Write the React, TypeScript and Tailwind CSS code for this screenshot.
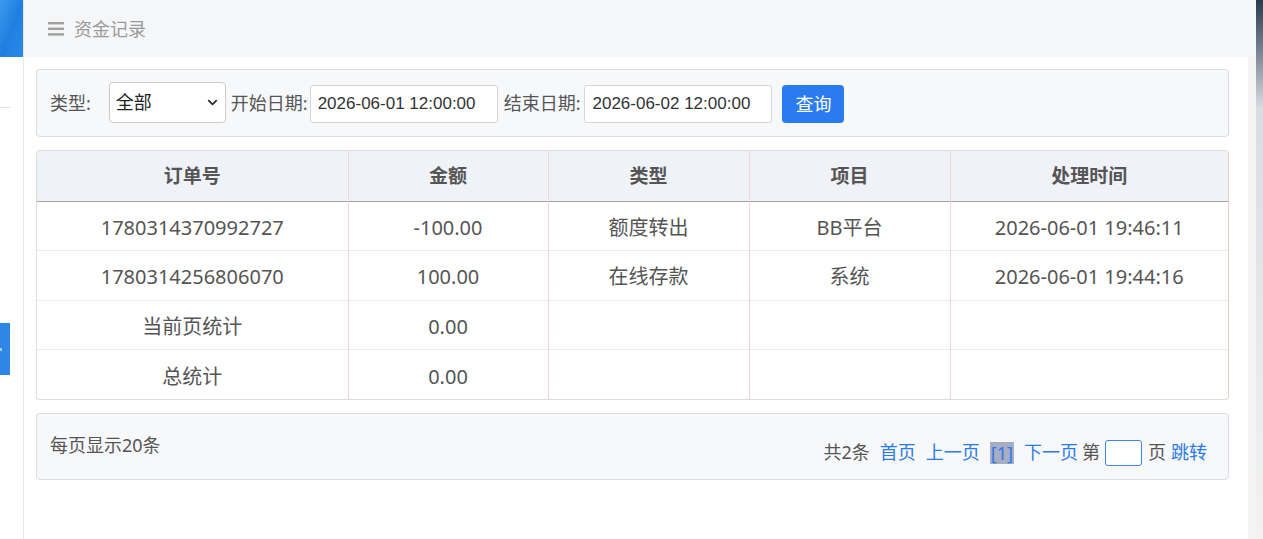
import { ChevronDown } from 'lucide-react'

interface Row {
  order: string
  amount: string
  type: string
  item: string
  time: string
}

const rows: Row[] = [
  { order: '1780314370992727', amount: '-100.00', type: '额度转出', item: 'BB平台', time: '2026-06-01 19:46:11' },
  { order: '1780314256806070', amount: '100.00', type: '在线存款', item: '系统', time: '2026-06-01 19:44:16' },
  { order: '当前页统计', amount: '0.00', type: '', item: '', time: '' },
  { order: '总统计', amount: '0.00', type: '', item: '', time: '' },
]

const headers = ['订单号', '金额', '类型', '项目', '处理时间']

const Sidebar = () => (
  <div className="w-[24px] shrink-0 flex flex-col bg-white border-r border-[#e6e6e6]">
    <div className="h-[57px] w-[23px] bg-gradient-to-br from-[#3d9af0] via-[#1f7fe0] to-[#2b8ae8]" />
    <div className="h-[50px]" />
    <div className="w-[10px] border-t border-[#dddddd]" />
    <div className="h-[215px]" />
    <div className="relative h-[52px] w-[10px] bg-[#2d86e8]">
      <div className="absolute left-0 top-[25px] h-[3px] w-[2px] bg-[#a8cdf5]" />
    </div>
  </div>
)

const Header = () => (
  <div className="h-[57px] bg-[#f5f6f8] flex items-center pl-[24px] text-[#9a9a9a]">
    <svg width="16" height="14" viewBox="0 0 16 14" className="mr-[10px]">
      <rect x="0" y="0" width="16" height="2.4" fill="#a0a0a0" />
      <rect x="0" y="5.6" width="16" height="2.4" fill="#a0a0a0" />
      <rect x="0" y="11.2" width="16" height="2.4" fill="#a0a0a0" />
    </svg>
    <span className="text-[18px] leading-none">资金记录</span>
  </div>
)

const inputCls =
  "w-[188px] h-[38px] mt-[2px] rounded-[3px] border border-[#d5d5d5] bg-white pl-[7px] text-[17px] text-[#333] outline-none [font-family:'Liberation_Sans',Arial,sans-serif]"

const FilterBar = () => (
  <div className="h-[68px] rounded-[4px] border border-[#d9dce1] bg-[#f7f8fa] flex items-center pl-[13px] text-[18px] text-[#555]">
    <span className="mr-[18px]">类型:</span>
    <div className="relative w-[117px] h-[41px] mb-[2px]">
      <select className="appearance-none w-full h-full rounded-[4px] border border-[#cccccc] bg-white pl-[6px] text-[18px] text-[#222] outline-none">
        <option>全部</option>
      </select>
      <ChevronDown className="absolute right-[6px] top-[13px] w-[15px] h-[15px] text-[#333] pointer-events-none" strokeWidth={3} />
    </div>
    <span className="ml-[5px] mr-[2px]">开始日期:</span>
    <input readOnly value="2026-06-01 12:00:00" className={inputCls} />
    <span className="ml-[6px] mr-[4px]">结束日期:</span>
    <input readOnly value="2026-06-02 12:00:00" className={inputCls} />
    <button className="ml-[10px] mt-[2px] w-[62px] h-[38px] rounded-[4px] bg-[#2a7bf0] text-white text-[18px]">
      查询
    </button>
  </div>
)

const DataTable = () => (
  <div className="mt-[13px] rounded-[4px] border border-[#d9dce1] border-r-[#f0c8c8] overflow-hidden">
    <table className="w-full table-fixed border-collapse">
      <colgroup>
        <col className="w-[311px]" />
        <col className="w-[200px]" />
        <col className="w-[201px]" />
        <col className="w-[201px]" />
        <col />
      </colgroup>
      <thead>
        <tr className="h-[50px] bg-[#eff2f6] border-b border-[#a89ea2]">
          {headers.map((h, i) => (
            <th
              key={h}
              className={`text-[19px] font-bold text-[#555] text-center ${
                i < headers.length - 1 ? 'border-r border-[#f0d6d6]' : ''
              }`}
            >
              {h}
            </th>
          ))}
        </tr>
      </thead>
      <tbody>
        {rows.map((r, idx) => (
          <tr key={idx} className={`h-[49.5px] ${idx < rows.length - 1 ? 'border-b border-[#ececec]' : ''}`}>
            {[r.order, r.amount, r.type, r.item, r.time].map((c, i) => (
              <td
                key={i}
                className={`pt-[4px] text-[20px] text-[#555] text-center ${
                  i < 4 ? 'border-r border-[#f0d6d6]' : ''
                }`}
              >
                {c}
              </td>
            ))}
          </tr>
        ))}
      </tbody>
    </table>
  </div>
)

const Pagination = () => (
  <div className="mt-[13px] h-[67px] rounded-[4px] border border-[#d9dce1] bg-[#f7f8fa] flex justify-between items-start pl-[13px] pr-[21px] pt-[18px] text-[18px] text-[#555]">
    <span>每页显示20条</span>
    <div className="flex items-center mt-[7px]">
      <span>共2条</span>
      <a className="ml-[10px] text-[#2a7ae8]">首页</a>
      <a className="ml-[10px] text-[#2a7ae8]">上一页</a>
      <span className="ml-[10px] px-[1px] bg-[#a7adc2] text-[#2a7ae8] leading-[22px]">[1]</span>
      <a className="ml-[10px] text-[#2a7ae8]">下一页</a>
      <span className="ml-[4px]">第</span>
      <input className="ml-[5px] w-[37px] h-[26px] rounded-[3px] border border-[#3d85ee] bg-white outline-none" />
      <span className="ml-[6px]">页</span>
      <a className="ml-[5px] text-[#2a7ae8]">跳转</a>
    </div>
  </div>
)

export default function App() {
  return (
    <div className="h-[539px] w-[1263px] overflow-hidden flex bg-white [font-family:'Noto_Sans','Noto_Sans_CJK_SC',sans-serif]">
      <Sidebar />
      <div className="flex-1 flex flex-col">
        <Header />
        <div className="flex-1 flex">
          <div className="flex-1 bg-white pl-[12px] pr-[19px] pt-[12px]">
            <FilterBar />
            <DataTable />
            <Pagination />
          </div>
          <div className="w-[8px] bg-[#f3f3f3]" />
        </div>
      </div>
      <div className="w-[7px] bg-gradient-to-b from-[#2c3c4e] via-[#d8dde2] via-[20%] to-[#f2f2f2]" />
    </div>
  )
}
